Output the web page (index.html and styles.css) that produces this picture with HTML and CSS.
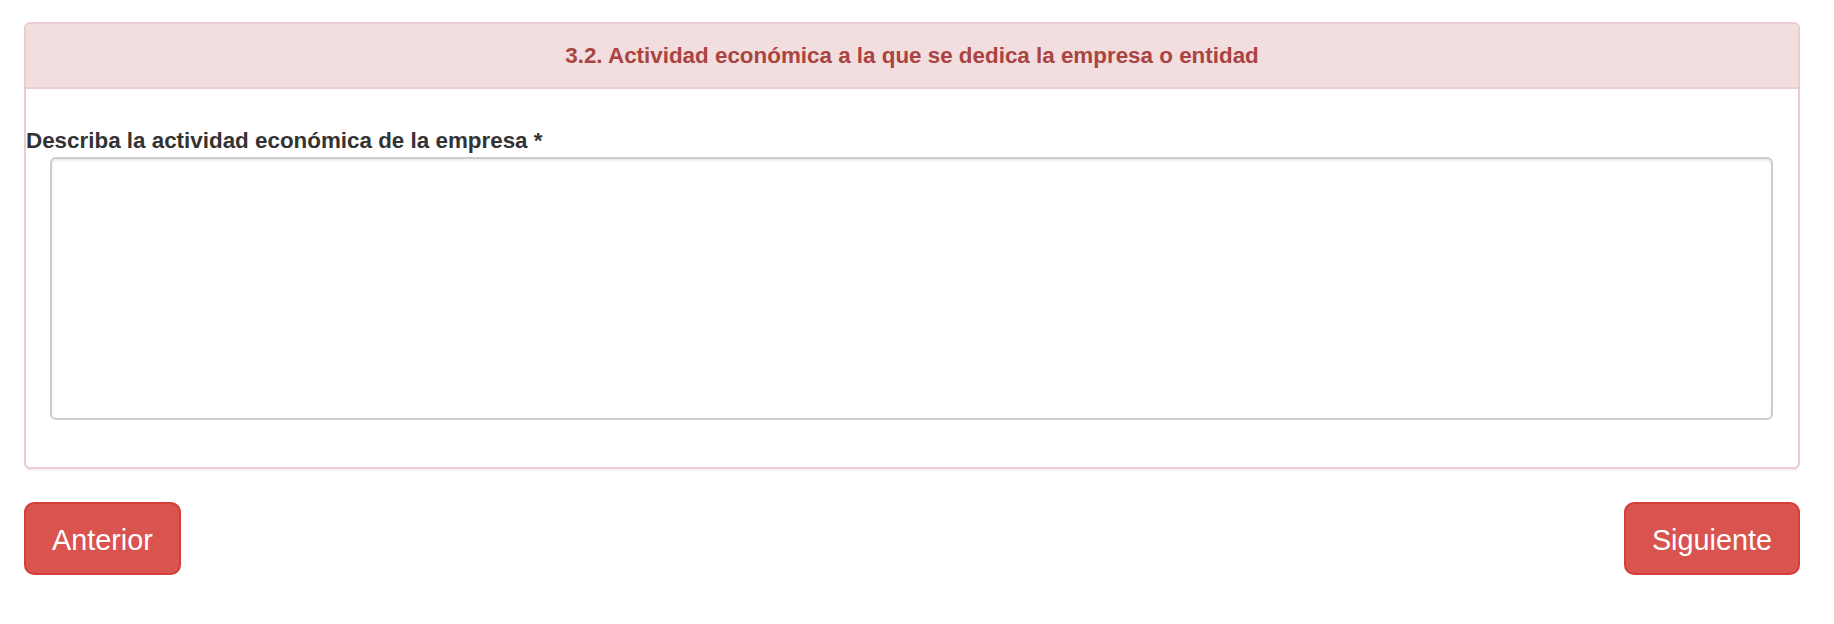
FILE: index.html
```html
<!DOCTYPE html>
<html lang="es">
<head>
<meta charset="utf-8">
<title>Actividad económica</title>
<link rel="stylesheet" href="styles.css">
</head>
<body>
<div class="page">
  <div class="panel">
    <div class="panel-heading">
      <h3 class="panel-title">3.2. Actividad económica a la que se dedica la empresa o entidad</h3>
    </div>
    <div class="panel-body">
      <label class="field-label" for="actividad">Describa la actividad económica de la empresa *</label>
      <textarea id="actividad" class="field-input"></textarea>
    </div>
  </div>
  <div class="nav-row">
    <button class="btn">Anterior</button>
    <button class="btn">Siguiente</button>
  </div>
</div>
</body>
</html>
```
FILE: styles.css
```css
html, body {
  margin: 0;
  padding: 0;
  background: #ffffff;
}

body {
  font-family: "Liberation Sans", Arial, Helvetica, sans-serif;
  color: #333333;
}

.page {
  padding: 22px 34px 0 24px;
}

.panel {
  border: 2px solid #ebccd1;
  border-radius: 6px;
  background: #ffffff;
  box-shadow: 0 2px 2px rgba(0, 0, 0, 0.05);
  overflow: hidden;
}

.panel-heading {
  background: #f2dede;
  border-bottom: 2px solid #ebccd1;
  padding: 16px 24px;
}

.panel-title {
  margin: 0;
  font-size: 22.4px;
  line-height: 31px;
  font-weight: bold;
  color: #a94442;
  text-align: center;
}

.panel-body {
  padding: 36px 0 47px 0;
  display: flex;
  flex-direction: column;
}

.field-label {
  display: block;
  font-size: 22.4px;
  line-height: 32px;
  font-weight: bold;
  color: #333333;
  margin: 0;
}

.field-input {
  display: block;
  box-sizing: border-box;
  height: 263px;
  margin: 0 25px 0 24px;
  border: 2px solid #cccccc;
  border-radius: 6px;
  box-shadow: inset 0 2px 2px rgba(0, 0, 0, 0.075);
  background: #ffffff;
  font-family: "Liberation Sans", Arial, sans-serif;
  font-size: 22.4px;
  resize: none;
  padding: 10px 19px;
}

.nav-row {
  margin-top: 33px;
  display: flex;
  justify-content: space-between;
}

.btn {
  box-sizing: border-box;
  height: 73px;
  padding: 18px 26px 14px;
  border: 2px solid #d43f3a;
  border-radius: 10px;
  background: #d9534f;
  color: #ffffff;
  font-family: "Liberation Sans", Arial, sans-serif;
  font-size: 28.8px;
  line-height: 37px;
  font-weight: normal;
  cursor: pointer;
}
```
